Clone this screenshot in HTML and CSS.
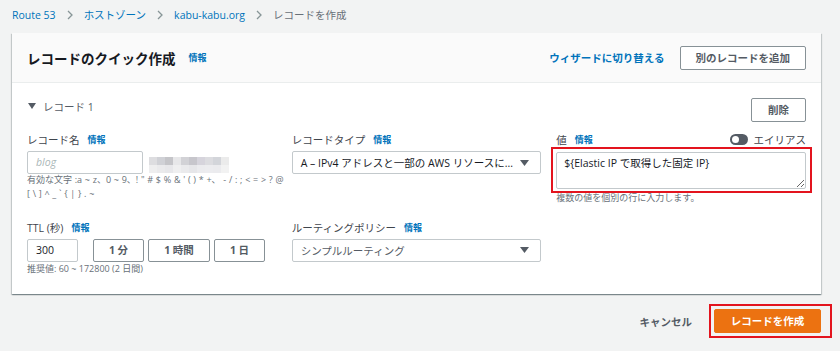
FILE: index.html
```html
<!DOCTYPE html>
<html lang="ja">
<head>
<meta charset="utf-8">
<title>レコードを作成</title>
<link rel="stylesheet" href="styles.css">
</head>
<body>
<div class="page">
  <nav class="crumbs">
    <a class="crumb-link">Route 53</a>
    <svg class="chev" width="6" height="10" viewBox="0 0 6 10"><polyline points="1,1 5,5 1,9" fill="none" stroke="#879596" stroke-width="1.3"/></svg>
    <a class="crumb-link">ホストゾーン</a>
    <svg class="chev" width="6" height="10" viewBox="0 0 6 10"><polyline points="1,1 5,5 1,9" fill="none" stroke="#879596" stroke-width="1.3"/></svg>
    <a class="crumb-link">kabu-kabu.org</a>
    <svg class="chev" width="6" height="10" viewBox="0 0 6 10"><polyline points="1,1 5,5 1,9" fill="none" stroke="#879596" stroke-width="1.3"/></svg>
    <span class="crumb-current">レコードを作成</span>
  </nav>

  <section class="card">
    <header class="card-head">
      <div class="title-wrap">
        <h1 class="title">レコードのクイック作成</h1>
        <a class="info">情報</a>
      </div>
      <div class="head-actions">
        <a class="wizard">ウィザードに切り替える</a>
        <button class="btn">別のレコードを追加</button>
      </div>
    </header>

    <div class="card-body">
      <div class="record-head">
        <div class="expander">
          <svg width="8" height="6" viewBox="0 0 8 6"><polygon points="0,0 8,0 4,6" fill="#545b64"/></svg>
          <span>レコード 1</span>
        </div>
        <button class="btn btn-small">削除</button>
      </div>

      <div class="grid">
        <div class="field">
          <div class="label-row"><span class="label">レコード名</span><a class="info">情報</a></div>
          <div class="name-row">
            <div class="input input-name placeholder">blog</div>
            <div class="pixelated"></div>
          </div>
          <div class="help help-chars">有効な文字 :a ~ z、0 ~ 9、! " # $ % &amp; ' ( ) * +、 - / : ; &lt; = &gt; ? @<br>[ \ ] ^ _ ` { | } . ~</div>
        </div>

        <div class="field">
          <div class="label-row"><span class="label">レコードタイプ</span><a class="info">情報</a></div>
          <div class="select">
            <span class="select-text">A – IPv4 アドレスと一部の AWS リソースに...</span>
            <svg width="9" height="6" viewBox="0 0 9 6"><polygon points="0,0 9,0 4.5,6" fill="#545b64"/></svg>
          </div>
        </div>

        <div class="field">
          <div class="label-row split">
            <div class="label-group"><span class="label">値</span><a class="info">情報</a></div>
            <div class="alias"><span class="toggle"><span class="knob"></span></span><span class="label">エイリアス</span></div>
          </div>
          <div class="value-frame">
            <textarea class="textarea">${Elastic IP で取得した固定 IP}</textarea>
          </div>
          <div class="help help-value">複数の値を個別の行に入力します。</div>
        </div>

        <div class="field">
          <div class="label-row"><span class="label">TTL (秒)</span><a class="info">情報</a></div>
          <div class="ttl-row">
            <div class="input input-ttl">300</div>
            <div class="ttl-buttons">
              <button class="btn btn-ttl">1 分</button>
              <button class="btn btn-ttl">1 時間</button>
              <button class="btn btn-ttl">1 日</button>
            </div>
          </div>
          <div class="help">推奨値: 60 ~ 172800 (2 日間)</div>
        </div>

        <div class="field">
          <div class="label-row"><span class="label">ルーティングポリシー</span><a class="info">情報</a></div>
          <div class="select">
            <span class="select-text muted">シンプルルーティング</span>
            <svg width="9" height="6" viewBox="0 0 9 6"><polygon points="0,0 9,0 4.5,6" fill="#545b64"/></svg>
          </div>
        </div>
      </div>
    </div>
  </section>

  <footer class="footer">
    <button class="btn-link">キャンセル</button>
    <div class="create-frame">
      <button class="btn-primary">レコードを作成</button>
    </div>
  </footer>
</div>
</body>
</html>
```

FILE: styles.css
```css
* { box-sizing: border-box; }

html, body {
  margin: 0;
  padding: 0;
  background: #f2f3f3;
  font-family: "Open Sans", "Noto Sans CJK JP", sans-serif;
  font-size: 10.5px;
  color: #16191f;
}

button {
  font-family: inherit;
  cursor: pointer;
}

.page {
  padding: 6px 19px 0 12px;
}

/* breadcrumbs */
.crumbs {
  display: flex;
  align-items: center;
  gap: 11px;
  height: 18px;
  margin-bottom: 9px;
  line-height: 18px;
}
.crumb-link { color: #0073bb; }
.crumb-current { color: #687078; }
.chev { display: block; }

/* card */
.card {
  background: #fff;
  box-shadow: 0 1px 1px 0 rgba(0, 28, 36, 0.3), 1px 1px 1px 0 rgba(0, 28, 36, 0.15), -1px 1px 1px 0 rgba(0, 28, 36, 0.15);
}
.card-head {
  height: 50px;
  padding: 0 15px;
  background: #fafafa;
  border-bottom: 1px solid #eaeded;
  display: flex;
  align-items: center;
  justify-content: space-between;
}
.title-wrap {
  display: flex;
  align-items: center;
  gap: 13px;
}
.title {
  margin: 0;
  font-size: 13.5px;
  font-weight: 700;
  color: #16191f;
}
.info {
  color: #0073bb;
  font-size: 9px;
  font-weight: 700;
}
.head-actions {
  display: flex;
  align-items: center;
  gap: 15px;
}
.wizard {
  color: #0073bb;
  font-weight: 700;
  font-size: 10.5px;
}

.btn {
  height: 24px;
  padding: 0 15px;
  background: #fff;
  border: 1px solid #879196;
  border-radius: 2px;
  color: #545b64;
  font-size: 10.5px;
  font-weight: 700;
  line-height: 22px;
}
.btn-small { padding: 0 16px; }

.card-body {
  padding: 15px 15px 19px;
}

.record-head {
  display: flex;
  justify-content: space-between;
  align-items: flex-start;
  height: 24px;
}
.expander {
  display: flex;
  align-items: center;
  gap: 7px;
  height: 16px;
  color: #545b64;
  padding-left: 1px;
}
.expander svg { display: block; }

.grid {
  margin-top: 10px;
  display: grid;
  grid-template-columns: repeat(3, minmax(0, 1fr));
  column-gap: 15px;
  row-gap: 15px;
}

.label-row {
  display: flex;
  align-items: center;
  gap: 8px;
  height: 15px;
  margin-bottom: 4px;
}
.label-row.split { justify-content: space-between; }
.label-group { display: flex; align-items: center; gap: 8px; }
.label { color: #3f454d; }

.alias {
  display: flex;
  align-items: center;
  gap: 6px;
}
.toggle {
  position: relative;
  width: 18px;
  height: 11px;
  border-radius: 6px;
  background: #545b64;
  display: block;
}
.knob {
  position: absolute;
  left: 2px;
  top: 2px;
  width: 7px;
  height: 7px;
  border-radius: 50%;
  background: #fff;
}

.input {
  height: 23px;
  border: 1px solid #c3c9cc;
  border-radius: 2px;
  background: #fff;
  padding: 0 8px;
  line-height: 21px;
  color: #16191f;
}
.placeholder {
  color: #aab7b8;
  font-style: italic;
}
.name-row {
  display: flex;
  align-items: flex-start;
  gap: 6px;
}
.input-name { width: 116px; }
.pixelated {
  margin-top: 6px;
  width: 80px;
  height: 16px;
  background:
    linear-gradient(90deg, #dddde0 0 8px, #d0d1d6 8px 16px, #c5c5c9 16px 24px, #e7e7e9 24px 32px, #d2d2d6 32px 40px, #c7c6cc 40px 48px, #d6d4dc 48px 56px, #dcdce0 56px 64px, #d3d5da 64px 72px, #ebebeb 72px 80px) top / 100% 50% no-repeat,
    linear-gradient(90deg, #eeeeef 0 8px, #eaeaec 8px 16px, #e7e7ea 16px 24px, #efeff0 24px 32px, #eaeaec 32px 40px, #e6e6e9 40px 48px, #ebebee 48px 56px, #ececef 56px 64px, #ebebee 64px 72px, #f2f2f2 72px 80px) bottom / 100% 50% no-repeat;
}

.help {
  color: #687078;
  font-size: 9px;
  line-height: 13.5px;
}
.help-chars { white-space: nowrap; margin-top: -1px; word-spacing: 0.4px; }
.help-value { margin-top: 2px; }

.select {
  height: 23px;
  border: 1px solid #c3c9cc;
  border-radius: 2px;
  background: #fff;
  padding: 0 11px 0 8px;
  display: flex;
  align-items: center;
  justify-content: space-between;
  white-space: nowrap;
}
.select svg { display: block; flex: none; }
.select-text { color: #16191f; }
.select-text.muted { color: #545b64; }

/* red annotation frame around the value textarea */
.value-frame {
  margin: -4px -6px -4px -5px;
  border: 2px solid #e3141e;
  padding: 3px 4px 2px 3px;
}
.textarea {
  display: block;
  width: 100%;
  height: 37px;
  margin: 0;
  border: 1px solid #c3c9cc;
  border-radius: 2px;
  padding: 3px 7px;
  font-family: inherit;
  font-size: 10.5px;
  line-height: 15px;
  color: #16191f;
  resize: vertical;
}

.ttl-row {
  display: flex;
  align-items: center;
  gap: 15px;
}
.input-ttl { width: 51px; }
.ttl-buttons {
  display: flex;
  gap: 4px;
}
.btn-ttl { height: 23px; line-height: 21px; width: 51px; padding: 0; }
.btn-ttl:nth-child(2) { width: 62px; }

/* footer */
.footer {
  margin: 10px -11px 0 0;
  display: flex;
  justify-content: flex-end;
  align-items: center;
  gap: 6px;
}
.btn-link {
  background: none;
  border: none;
  padding: 0 11px;
  height: 24px;
  color: #545b64;
  font-size: 10.5px;
  font-weight: 700;
}
.create-frame {
  border: 2px solid #e3141e;
  padding: 3px 9px 3px 3px;
}
.btn-primary {
  display: block;
  height: 24px;
  width: 107px;
  padding: 0;
  background: #ec7211;
  border: 1px solid #ec7211;
  border-radius: 2px;
  color: #fff;
  font-size: 10.5px;
  font-weight: 700;
  line-height: 22px;
}
```
